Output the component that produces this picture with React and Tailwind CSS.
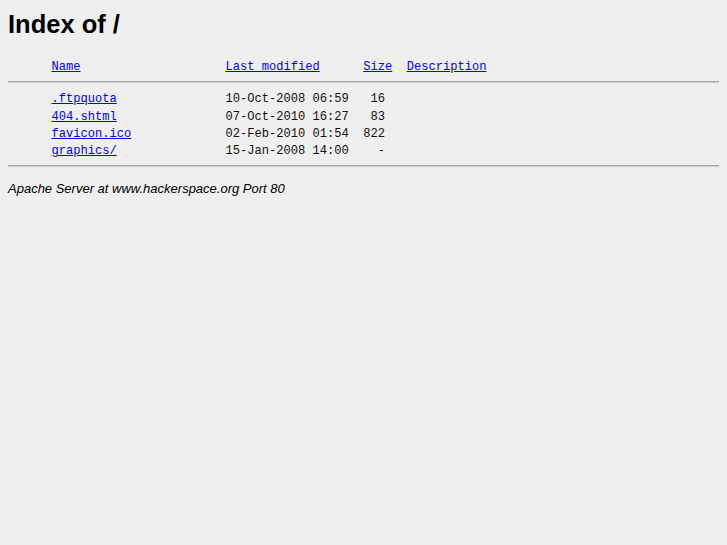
const files = [
  { name: '.ftpquota', href: '.ftpquota', date: '10-Oct-2008 06:59', size: '16' },
  { name: '404.shtml', href: '404.shtml', date: '07-Oct-2010 16:27', size: '83' },
  { name: 'favicon.ico', href: 'favicon.ico', date: '02-Feb-2010 01:54', size: '822' },
  { name: 'graphics/', href: 'graphics/', date: '15-Jan-2008 14:00', size: '-' },
];

function Rule() {
  return <div className="h-[2px] border-t border-t-[#a8a8a8] border-b border-b-[#cfcfcf]" />;
}

export default function App() {
  return (
    <div className="min-h-screen bg-[#efefef] px-2 pt-[9px] text-black">
      <h1 className="text-[25.5px] leading-[30px] font-bold" style={{ fontFamily: '"Liberation Sans", Arial, sans-serif' }}>
        Index of /
      </h1>

      <pre
        className="mt-[20px] text-[12.08px] leading-[17.3px] text-[#111]"
        style={{ fontFamily: '"Liberation Mono", "Courier New", monospace' }}
      >
        <div>
          {'      '}
          <a href="?C=N;O=D" className="text-[#0000ee] underline">Name</a>
          {'                    '}
          <a href="?C=M;O=A" className="text-[#0000ee] underline">Last modified</a>
          {'      '}
          <a href="?C=S;O=A" className="text-[#0000ee] underline">Size</a>
          {'  '}
          <a href="?C=D;O=A" className="text-[#0000ee] underline">Description</a>
        </div>
        <div className="mt-[5px] mb-[8px]">
          <Rule />
        </div>
        {files.map((f) => (
          <div key={f.name}>
            {'      '}
            <a href={f.href} className="text-[#0000ee] underline">{f.name}</a>
            {' '.repeat(24 - f.name.length)}
            {f.date}
            {'  '}
            {f.size.padStart(3, ' ')}
            {'  '}
          </div>
        ))}
        <div className="mt-[5px]">
          <Rule />
        </div>
      </pre>

      <address
        className="mt-[14px] text-[13px] leading-[15px] italic"
        style={{ fontFamily: '"Liberation Sans", Arial, sans-serif' }}
      >
        Apache Server at www.hackerspace.org Port 80
      </address>
    </div>
  );
}
